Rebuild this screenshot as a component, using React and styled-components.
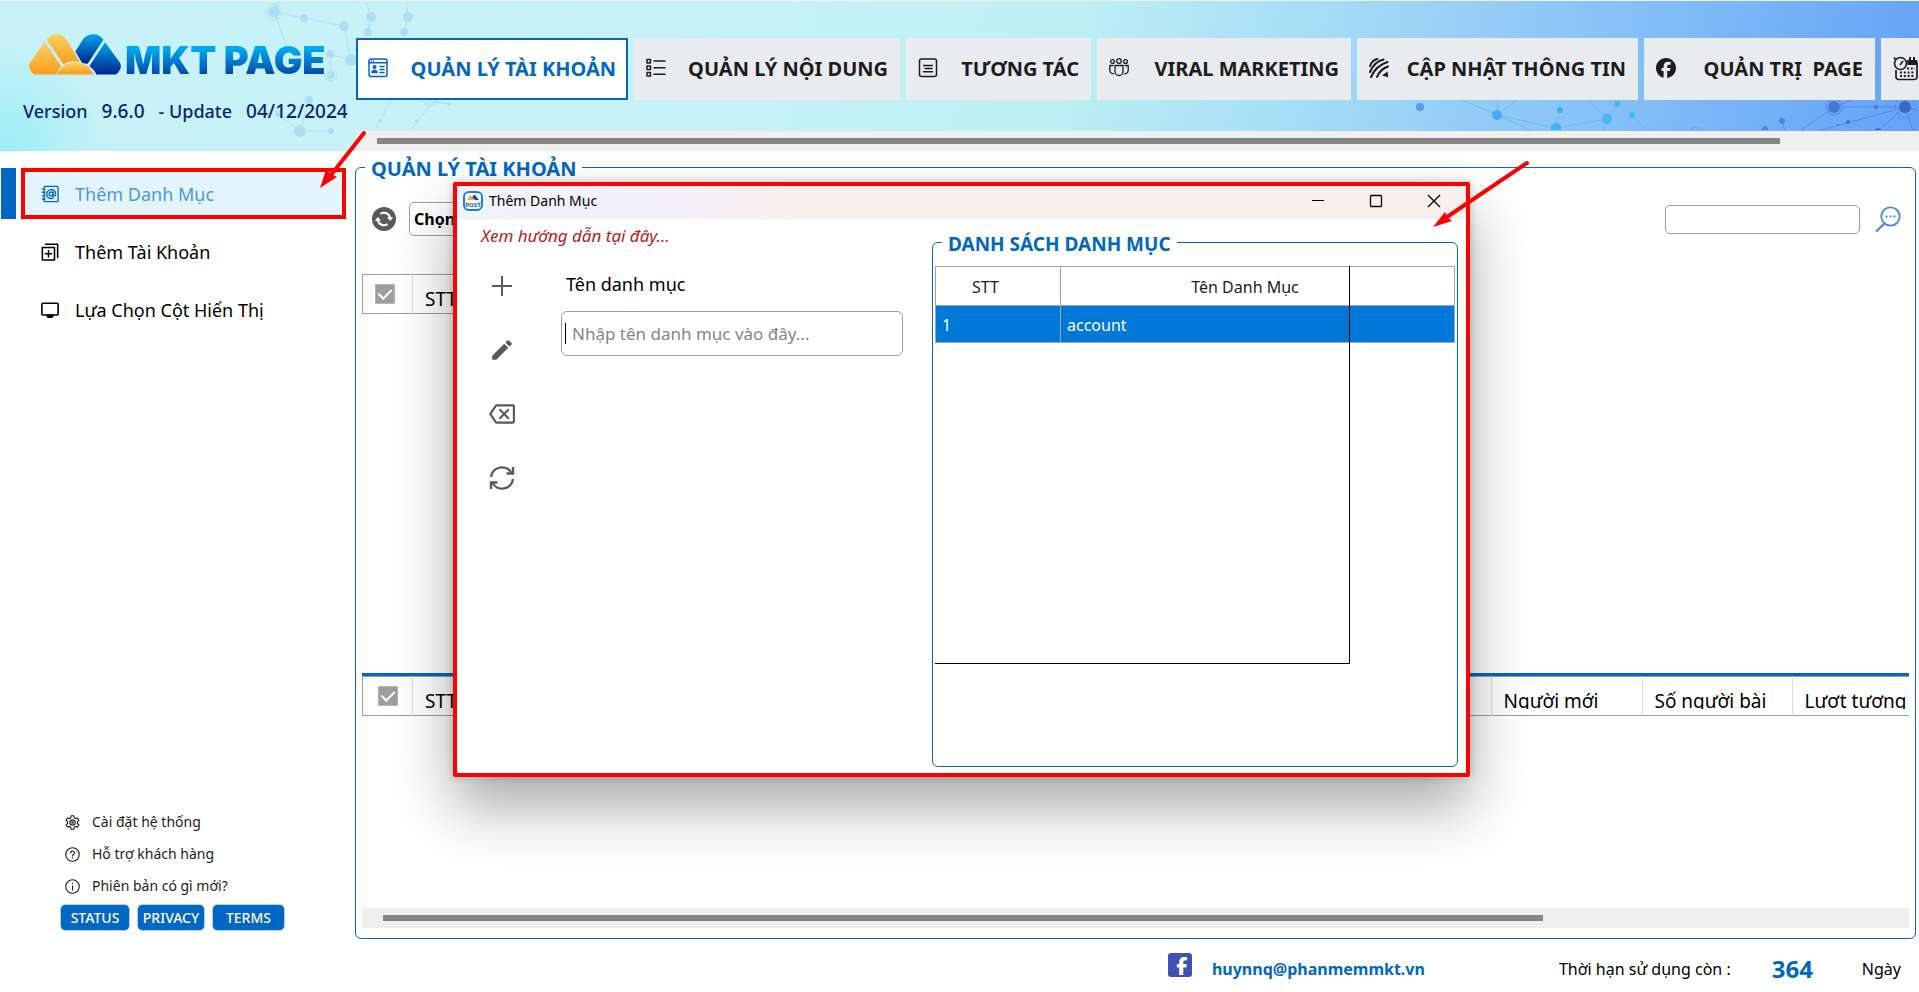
import React, { useState } from 'react';
import styled, { createGlobalStyle, css } from 'styled-components';
import { FaFacebook, FaFacebookF } from 'react-icons/fa6';
import { MdEdit, MdOutlineBackspace } from 'react-icons/md';

const BLUE = '#0067c5';
const RED = '#ff0000';

const GlobalStyle = createGlobalStyle`
  * {
    box-sizing: border-box;
  }

  body {
    margin: 0;
    background: #ffffff;
    color: #000000;
    font-family: "Noto Sans", "Open Sans", sans-serif;
  }

  button, input, select {
    font: inherit;
    color: inherit;
  }
`;

const Page = styled.div`
  position: relative;
  display: flex;
  flex-direction: column;
  min-height: 100vh;
  overflow: hidden;
`;

const Header = styled.header`
  position: relative;
  display: grid;
  grid-template-columns: 356px minmax(0, 1fr);
  height: 151px;
  border-top: 1px solid #f0f0f0;
  background:
    radial-gradient(circle at 0 100%, #9beef6 0, rgba(155, 238, 246, 0) 110px),
    linear-gradient(105deg, #c7f1f7 0%, #c6f2f7 35%, #bcf0f4 55%, #a9dff6 66%, #8cc7f7 80%, #78b4f7 90%, #62a2f6 100%);
`;

const HeaderArt = styled.svg`
  position: absolute;
  top: 0;
  ${(props) => (props.$side === 'right' ? 'right: 0;' : 'left: 230px;')}
`;

const Brand = styled.div`
  position: relative;
  padding: 25px 0 0 23px;
`;

const Logo = styled.div`
  display: flex;
  align-items: center;
  gap: 4px;
  height: 56px;
  padding-left: 6px;
`;

const LogoText = styled.span`
  font-family: Inter, "Open Sans", sans-serif;
  font-size: 38px;
  font-weight: 900;
  line-height: 40px;
  padding-top: 12px;
  white-space: nowrap;
  color: transparent;
  background: linear-gradient(#00a8f0 40%, #0347a8 90%);
  background-clip: text;
`;

const VersionRow = styled.div`
  display: flex;
  align-items: baseline;
  gap: 14px;
  margin-top: 17px;
  font-size: 19px;
  font-weight: 500;
  line-height: 24px;
  color: #0a2472;
  white-space: nowrap;
`;

const VersionLabel = styled.span`
  font-size: 18px;
`;

const NavArea = styled.div`
  position: relative;
  display: flex;
  flex-direction: column;
  justify-content: space-between;
  padding-top: 37px;
  overflow: hidden;
`;

const Tabs = styled.nav`
  display: flex;
  gap: 6px;
`;

const Tab = styled.button`
  display: flex;
  flex: 0 0 ${(props) => props.$width}px;
  align-items: center;
  justify-content: space-between;
  height: 62px;
  padding: 0 10px 2px;
  border: 2px solid ${(props) => (props.$active ? BLUE : '#e9ebee')};
  background: ${(props) => (props.$active ? '#ffffff' : '#e9ebee')};
  color: ${(props) => (props.$active ? BLUE : '#1c1c1c')};
  font-size: 20px;
  font-weight: 700;
  white-space: pre;
  cursor: pointer;

  svg {
    flex: none;
  }
`;

const Track = styled.div`
  display: flex;
  align-items: center;
  height: 20px;
  background: #efefef;
`;

const Thumb = styled.div`
  height: 6px;
  margin-left: 21px;
  width: ${(props) => props.$width};
  background: #858585;
`;

const Body = styled.div`
  display: grid;
  flex: 1;
  grid-template-columns: 355px minmax(0, 1fr);
`;

const Sidebar = styled.aside`
  display: flex;
  flex-direction: column;
  justify-content: space-between;
  padding: 17px 9px 61px 1px;
`;

const Menu = styled.nav`
  display: flex;
  flex-direction: column;
  gap: 7px;
`;

const MenuRow = styled.div`
  display: flex;
  gap: 5px;
  height: 51px;

  &::before {
    content: "";
    width: 15px;
    background: ${(props) => (props.$active ? BLUE : 'transparent')};
  }
`;

const MenuButton = styled.button`
  display: flex;
  flex: 1;
  align-items: center;
  gap: 16px;
  padding: 0 16px;
  border: 4px solid transparent;
  background: none;
  font-size: 18px;
  cursor: pointer;

  ${(props) => props.$active && css`
    border-color: ${RED};
    background: #e4f4fd;
    color: #4a98e0;

    svg {
      color: ${BLUE};
    }
  `}
`;

const HelpArea = styled.div`
  display: flex;
  flex-direction: column;
  gap: 6px;
  padding-left: 59px;
`;

const HelpLinks = styled.div`
  display: flex;
  flex-direction: column;
  gap: 8px;
  padding-left: 5px;
`;

const HelpLink = styled.a`
  display: flex;
  align-items: center;
  gap: 12px;
  font-size: 14px;
  line-height: 24px;
  color: #1c1c1c;
  text-decoration: none;
`;

const PillRow = styled.div`
  display: flex;
  gap: 7px;
`;

const Pill = styled.button`
  width: ${(props) => props.$width}px;
  height: 27px;
  padding: 0;
  border: 1px solid #b3d1ee;
  border-radius: 5px;
  background: ${BLUE};
  background-clip: padding-box;
  color: #ffffff;
  font-size: 14px;
  font-weight: 500;
  line-height: 20px;
`;

const Content = styled.div`
  display: flex;
  flex-direction: column;
  padding-top: 1px;
`;

const Group = styled.fieldset`
  display: flex;
  flex: 1;
  flex-direction: column;
  min-width: 0;
  margin: ${(props) => props.$margin};
  padding: ${(props) => props.$padding};
  border: 1px solid ${BLUE};
  border-radius: 6px;
`;

const Legend = styled.legend`
  margin-left: ${(props) => props.$offset}px;
  padding: 4px 6px 0;
  color: ${BLUE};
  font-size: ${(props) => props.$size}px;
  font-weight: 700;
  line-height: 26px;
`;

const Toolbar = styled.div`
  display: flex;
  align-items: center;
  justify-content: space-between;
  padding: 0 8px 38px 10px;
`;

const ToolGroup = styled.div`
  display: flex;
  align-items: center;
  gap: ${(props) => props.$gap}px;
`;

const IconButton = styled.button`
  display: flex;
  align-items: center;
  justify-content: center;
  padding: 0;
  border: none;
  background: none;
  color: #5a5a5a;
  cursor: pointer;
`;

const CategorySelect = styled.select`
  width: 220px;
  height: 34px;
  padding: 0 4px;
  border: 1px solid #9c9c9c;
  border-radius: 5px;
  background: #ffffff;
  font-size: 16px;
  font-weight: 700;
  appearance: none;
`;

const SearchInput = styled.input`
  width: 195px;
  height: 29px;
  padding: 0 8px;
  border: 1px solid #9c9c9c;
  border-radius: 5px;
  font-size: 16px;
`;

const GridPane = styled.div`
  flex: ${(props) => props.$grow} 1 0;
  min-height: 80px;
  overflow: hidden;
`;

const Splitter = styled.div`
  height: 3px;
  background: ${BLUE};
`;

const GridTable = styled.table`
  width: ${(props) => props.$width};
  table-layout: fixed;
  border-collapse: collapse;
  border: 1px solid #9c9c9c;
  border-right: none;

  th {
    height: 39px;
    padding: 5px 0 0 12px;
    border-right: 1px solid #dcdcdc;
    font-size: 19px;
    font-weight: 400;
    text-align: left;
    white-space: nowrap;
  }

  th:last-child {
    border-right: none;
  }
`;

const CheckHead = styled.th`
  && {
    width: 50px;
    padding: 0 0 0 ${(props) => props.$inset}px;
  }
`;

const HeadCell = styled.th`
  width: ${(props) => (props.$width ? `${props.$width}px` : 'auto')};
`;

/* the header row is shorter than its text, so descenders are cut off */
const HeadText = styled.div`
  height: 21px;
  line-height: 26px;
  overflow: hidden;
`;

const CheckAll = styled.input`
  display: block;
  width: 20px;
  height: 20px;
  margin: 0;
  appearance: none;
  background: #9e9e9e;
  border: 1px solid #b4b4b4;

  &:checked::after {
    content: "";
    display: block;
    width: 6px;
    height: 11px;
    margin: 1px auto 0;
    border: solid #ffffff;
    border-width: 0 2px 2px 0;
    transform: rotate(45deg);
  }
`;

const Footer = styled.footer`
  display: flex;
  align-items: center;
  justify-content: flex-end;
  height: 53px;
  padding: 6px 18px 0 0;
  font-size: 16px;
`;

const Account = styled.a`
  display: flex;
  align-items: center;
  gap: 20px;
  margin-right: 134px;
  color: ${BLUE};
  font-weight: 700;
  text-decoration: none;
`;

const Days = styled.strong`
  margin: 0 49px 0 41px;
  color: ${BLUE};
  font-size: 24px;
  line-height: 30px;
`;

const Window = styled.section`
  position: absolute;
  top: 182px;
  right: 449px;
  bottom: 215px;
  left: 453px;
  display: flex;
  flex-direction: column;
  border: 4px solid ${RED};
  border-radius: 2px;
  background: #ffffff;
  box-shadow: 0 30px 60px rgba(0, 0, 0, 0.34), 0 0 8px rgba(0, 0, 0, 0.2);
`;

const TitleBar = styled.div`
  display: flex;
  align-items: center;
  gap: 6px;
  height: 33px;
  padding: 0 25px 4px 6px;
  background: linear-gradient(100deg, #f2f2f9 0%, #f3f0f8 22%, #f9f0ee 34%, #f9f0ee 100%);
  font-size: 14px;
`;

const WindowTitle = styled.h1`
  flex: 1;
  margin: 0;
  font-size: 14px;
  font-weight: 400;
`;

const WindowControls = styled.div`
  display: flex;
  gap: 44px;

  button {
    color: #000000;
  }
`;

const WindowBody = styled.div`
  display: grid;
  flex: 1;
  grid-template-columns: 475px minmax(0, 1fr);
`;

const EditPane = styled.div`
  padding: 5px 29px 0 24px;
`;

const GuideLink = styled.a`
  display: block;
  color: #b22222;
  font-size: 17px;
  font-style: italic;
  line-height: 24px;
  text-decoration: none;
`;

const EditArea = styled.div`
  display: flex;
  gap: 38px;
  margin-top: 18px;
`;

const ToolColumn = styled.div`
  display: flex;
  flex-direction: column;
  gap: 24px;
  width: 42px;

  button {
    height: 40px;
  }
`;

const Form = styled.form`
  display: flex;
  flex: 1;
  flex-direction: column;
  gap: 15px;
  padding-top: 6px;

  label {
    padding-left: 5px;
    font-size: 18px;
    line-height: 24px;
  }
`;

const NameField = styled.div`
  display: flex;
  align-items: center;
  height: 45px;
  padding: 0 3px;
  border: 1px solid #9c9c9c;
  border-radius: 6px;
`;

const Caret = styled.span`
  width: 1px;
  height: 21px;
  background: #000000;
`;

const NameInput = styled.input`
  flex: 1;
  min-width: 0;
  padding: 0 6px;
  border: none;
  outline: none;
  background: none;
  font-size: 17px;

  &::placeholder {
    color: #858585;
    opacity: 1;
  }
`;

const ListPane = styled.div`
  display: flex;
  padding: 8px 8px 6px 0;
`;

const TableWrap = styled.div`
  position: relative;
  flex: 1;
`;

const CategoryTable = styled.table`
  width: 100%;
  table-layout: fixed;
  border-collapse: collapse;
  font-size: 16px;

  th, td {
    border: 1px solid #a5a5a5;
    font-weight: 400;
  }

  th {
    height: 39px;
    padding: 2px 25px 0 0;
    color: #1c1c1c;
  }

  th:first-child {
    width: 125px;
  }

  td {
    height: 37px;
    padding: 2px 6px 0;
    background: #0078d7;
    color: #ffffff;
  }
`;

/* leftover outline of the list area, drawn over the table */
const ListOutline = styled.div`
  position: absolute;
  top: 0;
  right: 105px;
  bottom: 102px;
  left: 0;
  border-right: 1px solid #000000;
  border-bottom: 1px solid #000000;
  pointer-events: none;
`;

const Arrow = styled.svg`
  position: absolute;
  top: ${(props) => props.$top}px;
  ${(props) => (props.$right ? `right: ${props.$right}px;` : `left: ${props.$left}px;`)}
  pointer-events: none;
`;

function LineIcon({ size = 20, stroke = 1.5, children }) {
  return (
    <svg
      width={size}
      height={size}
      viewBox="0 0 20 20"
      fill="none"
      stroke="currentColor"
      strokeWidth={stroke}
      strokeLinecap="round"
      strokeLinejoin="round"
      aria-hidden="true"
    >
      {children}
    </svg>
  );
}

const AccountIcon = () => (
  <LineIcon>
    <rect x="1" y="1" width="18" height="17.5" rx="2" />
    <path d="M1 4.8h18M3.2 3h.1M5.4 3h.1M12 8.5h4M12 11.5h4M12 14.5h4" />
    <circle cx="6.5" cy="9" r="1.3" fill="currentColor" />
    <path d="M4 14.5c.2-1.6 1.2-2.3 2.5-2.3s2.3.7 2.5 2.3z" fill="currentColor" />
  </LineIcon>
);

const ListIcon = () => (
  <LineIcon>
    <rect x="1" y="1.5" width="3.5" height="3.5" />
    <rect x="1" y="8" width="3.5" height="3.5" />
    <rect x="1" y="14.5" width="3.5" height="3.5" />
    <path d="M8 3h11M8 9.7h11M8 16.3h11" />
  </LineIcon>
);

const NoteIcon = () => (
  <LineIcon>
    <rect x="1.5" y="1" width="17" height="17.5" rx="2" />
    <path d="M5.5 7.5h9M7 10.5h7M5.5 13.8h9" />
  </LineIcon>
);

const PeopleIcon = () => (
  <LineIcon stroke={1.3}>
    <circle cx="3.5" cy="3.5" r="1.9" />
    <circle cx="10" cy="3" r="2.3" />
    <circle cx="16.5" cy="3.5" r="1.9" />
    <path d="M6 7.5h8v6a4 4 0 0 1-8 0zM4 7.5H.8v4.8a3.5 3.5 0 0 0 3.7 3.5M16 7.5h3.2v4.8a3.5 3.5 0 0 1-3.7 3.5" />
  </LineIcon>
);

const StripesIcon = () => (
  <LineIcon stroke={2}>
    <path d="M1 8C2.5 4 5 1.5 8.5 1M1 14C3.5 8 8 3 14.5 1.5M2 19C5 12 10.5 6.5 18.5 4M8 19c2-5 5.5-8.5 11-10.5" />
    <path d="M13 17.5l5.5-4 .8 5.8z" fill="currentColor" stroke="none" />
  </LineIcon>
);

const CalendarIcon = () => (
  <svg width="25" height="25" viewBox="0 0 25 25" fill="none" stroke="currentColor" strokeWidth="1.7" aria-hidden="true">
    <path d="M3 14v7a2.5 2.5 0 0 0 2.5 2.5h16A2.5 2.5 0 0 0 24 21V7a2 2 0 0 0-2-2" />
    <path d="M14 4h10v5H14.5z" fill="currentColor" stroke="none" />
    <path d="M17 1v4M21 1v4" strokeWidth="2" />
    <circle cx="7.5" cy="7.5" r="6" />
    <path d="M7 9l3-4M1 1.5l1.5 2" />
    <path d="M14 12.5h8M7 16.5h15M7 20h15" strokeWidth="2.2" strokeDasharray="2 1.8" />
  </svg>
);

const ContactIcon = () => (
  <LineIcon size={18}>
    <rect x="3.5" y="1.5" width="15.5" height="17" rx="1" />
    <path d="M1.5 4.5h3M1.5 8h3M1.5 12h3M1.5 15.5h3" />
    <circle cx="11.3" cy="10" r="2.2" />
    <path d="M13.5 7.8V11c0 2 2.8 1.8 2.8-1a5 5 0 1 0-2.3 4.2" />
  </LineIcon>
);

const AddCopyIcon = () => (
  <LineIcon size={18} stroke={1.7}>
    <rect x="1.5" y="5" width="13.5" height="14" />
    <path d="M5 1.5h13.5V16M8.3 8.5v7M4.8 12h7" />
  </LineIcon>
);

const ScreenIcon = () => (
  <LineIcon size={18} stroke={1.8}>
    <rect x="1" y="2.5" width="18" height="13" rx="1" />
    <path d="M6.5 16h7l-1.5 2H8z" fill="currentColor" />
  </LineIcon>
);

const GearIcon = () => (
  <LineIcon size={15}>
    <path d="M8.2 1h3.6l.6 2.8 1.7 1 2.7-.9 1.8 3.1-2.1 1.9v2.2l2.1 1.9-1.8 3.1-2.7-.9-1.7 1-.6 2.8H8.2l-.6-2.8-1.7-1-2.7.9L1.4 13l2.1-1.9V8.9L1.4 7l1.8-3.1 2.7.9 1.7-1z" />
    <circle cx="10" cy="10" r="3.5" />
    <circle cx="10" cy="10" r="1" />
  </LineIcon>
);

const QuestionIcon = () => (
  <LineIcon size={15}>
    <circle cx="10" cy="10" r="9" />
    <path d="M7.5 8a2.5 2.5 0 1 1 3.8 2c-.9.6-1.3 1-1.3 2M10 14.5v.2" />
  </LineIcon>
);

const InfoIcon = () => (
  <LineIcon size={15}>
    <circle cx="10" cy="10" r="9" />
    <path d="M10 9v5.5M10 5.8v.2" />
  </LineIcon>
);

const SyncIcon = () => (
  <svg width="26" height="26" viewBox="0 0 26 26" fill="none" stroke="currentColor" strokeWidth="2.4" aria-hidden="true">
    <path d="M2 12A11 11 0 0 1 22.5 8M24 14A11 11 0 0 1 3.5 18" />
    <path d="M24 2v6.5h-6.5M2 24v-6.5h6.5" />
  </svg>
);

const RefreshBadge = () => (
  <svg width="24" height="24" viewBox="0 0 24 24" fill="none" aria-hidden="true">
    <circle cx="12" cy="12" r="12" fill="#5a5a5a" />
    <path d="M8.5 6.8A6.3 6.3 0 0 1 18.2 11M15.5 17.2A6.3 6.3 0 0 1 5.800 13" stroke="#ffffff" strokeWidth="2" />
    <path d="M15 10.2h6.200l-3.100 3.800zM9 13.8H2.800L5.900 10z" fill="#ffffff" />
  </svg>
);

const SearchIcon = () => (
  <svg width="26" height="26" viewBox="0 0 26 26" fill="none" stroke="#4f87d2" strokeWidth="1.8" aria-hidden="true">
    <circle cx="15.5" cy="10.5" r="9.2" />
    <path d="M9.5 17.5L1 25.5" strokeWidth="2.2" />
    <path d="M10.5 10.5h2M14.5 10.5h2M18.5 10.5h2" strokeWidth="2" />
  </svg>
);

const LogoMark = () => (
  <svg width="92" height="41" viewBox="87 98 276 122" aria-hidden="true">
    <defs>
      <linearGradient id="gold" x1="0" y1="0" x2="0" y2="1">
        <stop offset="0" stopColor="#f9d262" />
        <stop offset="1" stopColor="#fc9c1c" />
      </linearGradient>
      <linearGradient id="sea" x1="0" y1="0" x2="0" y2="1">
        <stop offset="0" stopColor="#00a5ec" />
        <stop offset="1" stopColor="#02248c" />
      </linearGradient>
    </defs>
    <path d="M134 122L184 194Q174 204 168 219H103Q96 216 89 202Q85 192 90 184Z" fill="url(#gold)" />
    <path d="M140 115Q152 98 171 98Q189 99 200 115L240 183Q215 174 190 188Z" fill="url(#gold)" />
    <path d="M226 150L250 112Q261 98 281 98Q300 98 310 115L263 187Q253 187 246 184Z" fill="url(#sea)" />
    <path d="M315 122L359 182Q365 191 361 203Q354 216 347 219H289Q284 204 268 194Z" fill="url(#sea)" />
    <path d="M171 219Q187 183 226 183Q264 183 282 219Z" fill="url(#gold)" />
  </svg>
);

const AppIcon = () => (
  <svg width="20" height="20" viewBox="0 0 20 20" aria-hidden="true">
    <rect x="1" y="1" width="18" height="18" rx="5" fill="#ffffff" stroke="#1280e6" strokeWidth="2" />
    <path d="M4 9L7.5 4l4 5z" fill="#f8ae2c" />
    <path d="M9 6l2.5-2.5L16 9h-4z" fill="#0a4ea8" />
    <text x="10" y="15.5" textAnchor="middle" fontSize="6" fontWeight="700" fill="#0a5cc0">POST</text>
  </svg>
);

const FacebookBadge = styled.span`
  display: flex;
  align-items: flex-end;
  justify-content: flex-end;
  width: 24px;
  height: 24px;
  margin-bottom: 7px;
  padding: 0 1px 2px 0;
  border-radius: 3px;
  background: #3f51b5;
  color: #ffffff;
`;

const leftNodes = [
  [44, 11, 6], [74, 17, 4], [114, 25, 5], [141, 16, 5], [178, 16, 5], [138, 31, 4], [174, 31, 4],
  [100, 53, 4], [121, 59, 6], [101, 74, 4], [79, 99, 4], [48, 113, 3], [70, 130, 6], [101, 130, 3],
  [219, 103, 2], [150, 120, 2], [187, 120, 2], [146, 127, 1], [183, 127, 1],
];

const rightNodes = [
  [20, 106, 4, '#5a9bf2'], [97, 114, 5, '#4ea6f4'], [160, 109, 3, '#4ea6f4'], [156, 127, 5, '#4aaef6'],
  [207, 118, 5, '#4ab2f8'], [217, 103, 3, '#4ab2f8'], [232, 114, 3, '#4ab2f8'], [382, 120, 3, '#4a86e4'],
  [365, 128, 3, '#4a86e4'], [434, 106, 6, '#4478d8'], [476, 106, 2, '#4478d8'], [505, 106, 6, '#3f66c8'],
  [438, 124, 1, '#4070d0'], [448, 121, 2, '#4070d0'], [478, 130, 3, '#4070d0'],
];

const LeftArt = () => (
  <HeaderArt width="240" height="150" viewBox="0 0 240 150" $side="left" aria-hidden="true">
    <g stroke="#b3dff2" fill="none">
      <path d="M44 11L74 17L114 25L121 59L100 53V74M44 11L60 53M44 11L49 0M136 0L141 16L138 31M176 0L178 16L174 31M48 113L70 130H101M70 130L79 99M161 100L146 127M200 104L183 127M200 100L219 103" />
      <circle cx="44" cy="11" r="8" />
      <circle cx="101" cy="74" r="6" />
      <circle cx="200" cy="96" r="8" strokeWidth="3" strokeDasharray="2 2" />
    </g>
    {leftNodes.map(([x, y, r]) => <circle key={`${x}-${y}`} cx={x} cy={y} r={r} fill="#addff4" />)}
  </HeaderArt>
);

const RightArt = () => (
  <HeaderArt width="519" height="129" viewBox="0 0 519 129" $side="right" aria-hidden="true">
    <g stroke="#62b2f4" strokeOpacity="0.7" fill="none">
      <path d="M60 98L97 114L98 96M97 114L118 98M97 114L156 127L207 118L188 98M207 118L217 103M97 114L132 130M156 127L160 109M207 118L203 130M232 114L247 130" />
    </g>
    <g stroke="#4a7fdc" strokeOpacity="0.7" fill="none">
      <path d="M434 106H505L519 110M434 106L400 130M505 106L418 130M505 106L478 130M505 106L513 130M382 120L385 130M434 106L455 98" />
      <circle cx="434" cy="106" r="8" />
      <circle cx="505" cy="106" r="10" strokeDasharray="2 2" />
      <circle cx="296" cy="134" r="8" strokeDasharray="2 2" />
    </g>
    {rightNodes.map(([x, y, r, fill]) => <circle key={`${x}-${y}`} cx={x} cy={y} r={r} fill={fill} />)}
  </HeaderArt>
);

const tabs = [
  { label: 'QUẢN LÝ TÀI KHOẢN', width: 272, icon: <AccountIcon /> },
  { label: 'QUẢN LÝ NỘI DUNG', width: 266, icon: <ListIcon /> },
  { label: 'TƯƠNG TÁC', width: 185, icon: <NoteIcon /> },
  { label: 'VIRAL MARKETING', width: 254, icon: <PeopleIcon /> },
  { label: 'CẬP NHẬT THÔNG TIN', width: 281, icon: <StripesIcon /> },
  { label: 'QUẢN TRỊ  PAGE', width: 231, icon: <FaFacebook size={20} /> },
  { label: '', width: 240, icon: <CalendarIcon /> },
];

const menu = [
  { label: 'Thêm Danh Mục', icon: <ContactIcon /> },
  { label: 'Thêm Tài Khoản', icon: <AddCopyIcon /> },
  { label: 'Lựa Chọn Cột Hiển Thị', icon: <ScreenIcon /> },
];

const pills = [
  { label: 'STATUS', width: 70 },
  { label: 'PRIVACY', width: 68 },
  { label: 'TERMS', width: 73 },
];

function TopHeader() {
  const [active, setActive] = useState(0);

  return (
    <Header>
      <LeftArt />
      <RightArt />
      <Brand>
        <Logo>
          <LogoMark />
          <LogoText>MKT PAGE</LogoText>
        </Logo>
        <VersionRow>
          <VersionLabel>Version</VersionLabel>
          <span>9.6.0</span>
          <VersionLabel>- Update</VersionLabel>
          <span>04/12/2024</span>
        </VersionRow>
      </Brand>
      <NavArea>
        <Tabs>
          {tabs.map((tab, index) => (
            <Tab
              key={tab.label}
              type="button"
              aria-label={tab.label || 'Lịch'}
              $width={tab.width}
              $active={index === active}
              onClick={() => setActive(index)}
            >
              {tab.icon}
              {tab.label}
            </Tab>
          ))}
        </Tabs>
        <Track>
          <Thumb $width="calc(100% - 160px)" />
        </Track>
      </NavArea>
    </Header>
  );
}

function SideMenu() {
  const [active, setActive] = useState(0);

  return (
    <Sidebar>
      <Menu>
        {menu.map((item, index) => (
          <MenuRow key={item.label} $active={index === active}>
            <MenuButton type="button" $active={index === active} onClick={() => setActive(index)}>
              {item.icon}
              {item.label}
            </MenuButton>
          </MenuRow>
        ))}
      </Menu>
      <HelpArea>
        <HelpLinks>
          <HelpLink href="#settings"><GearIcon />Cài đặt hệ thống</HelpLink>
          <HelpLink href="#support"><QuestionIcon />Hỗ trợ khách hàng</HelpLink>
          <HelpLink href="#news"><InfoIcon />Phiên bản có gì mới?</HelpLink>
        </HelpLinks>
        <PillRow>
          {pills.map((pill) => (
            <Pill key={pill.label} type="button" $width={pill.width}>{pill.label}</Pill>
          ))}
        </PillRow>
      </HelpArea>
    </Sidebar>
  );
}

function AccountPanel() {
  return (
    <Group $margin="0 3px 0 0" $padding="20px 6px 10px">
      <Legend $offset={3} $size={20}>QUẢN LÝ TÀI KHOẢN</Legend>
      <Toolbar>
        <ToolGroup $gap={13}>
          <IconButton type="button" aria-label="Tải lại"><RefreshBadge /></IconButton>
          <CategorySelect aria-label="Danh mục">
            <option>Chọn danh mục</option>
          </CategorySelect>
        </ToolGroup>
        <ToolGroup $gap={15}>
          <SearchInput type="text" aria-label="Tìm kiếm" />
          <IconButton type="button" aria-label="Tìm"><SearchIcon /></IconButton>
        </ToolGroup>
      </Toolbar>
      <GridPane $grow={12}>
        <GridTable $width="50%">
          <thead>
            <tr>
              <CheckHead $inset={12}><CheckAll type="checkbox" aria-label="Chọn tất cả" defaultChecked /></CheckHead>
              <HeadCell><HeadText>STT</HeadText></HeadCell>
            </tr>
          </thead>
        </GridTable>
      </GridPane>
      <Splitter />
      <GridPane $grow={7}>
        <GridTable $width="100%">
          <thead>
            <tr>
              <CheckHead $inset={15}><CheckAll type="checkbox" aria-label="Chọn tất cả trang" defaultChecked /></CheckHead>
              <HeadCell><HeadText>STT</HeadText></HeadCell>
              <HeadCell $width={151}><HeadText>Người mới</HeadText></HeadCell>
              <HeadCell $width={150}><HeadText>Số người bài</HeadText></HeadCell>
              <HeadCell $width={117}><HeadText>Lượt tương</HeadText></HeadCell>
            </tr>
          </thead>
        </GridTable>
      </GridPane>
      <Track>
        <Thumb $width="75%" />
      </Track>
    </Group>
  );
}

function CategoryWindow() {
  const [name, setName] = useState('');

  return (
    <Window role="dialog" aria-label="Thêm Danh Mục">
      <TitleBar>
        <AppIcon />
        <WindowTitle>Thêm Danh Mục</WindowTitle>
        <WindowControls>
          <IconButton type="button" aria-label="Thu nhỏ">
            <svg width="14" height="14" viewBox="0 0 14 14" stroke="currentColor"><path d="M1 6.5h12" /></svg>
          </IconButton>
          <IconButton type="button" aria-label="Phóng to">
            <svg width="14" height="14" viewBox="0 0 14 14" fill="none" stroke="currentColor" strokeWidth="1.3"><rect x="1.5" y="1.5" width="11" height="11" rx="1" /></svg>
          </IconButton>
          <IconButton type="button" aria-label="Đóng">
            <svg width="14" height="14" viewBox="0 0 14 14" stroke="currentColor" strokeWidth="1.3"><path d="M1 1l12 12M13 1L1 13" /></svg>
          </IconButton>
        </WindowControls>
      </TitleBar>
      <WindowBody>
        <EditPane>
          <GuideLink href="#guide">Xem hướng dẫn tại đây...</GuideLink>
          <EditArea>
            <ToolColumn>
              <IconButton type="button" aria-label="Thêm">
                <svg width="20" height="20" viewBox="0 0 20 20" stroke="currentColor" strokeWidth="2"><path d="M10 0v20M0 10h20" /></svg>
              </IconButton>
              <IconButton type="button" aria-label="Sửa"><MdEdit size={26} /></IconButton>
              <IconButton type="button" aria-label="Xóa"><MdOutlineBackspace size={26} /></IconButton>
              <IconButton type="button" aria-label="Làm mới"><SyncIcon /></IconButton>
            </ToolColumn>
            <Form onSubmit={(e) => e.preventDefault()}>
              <label htmlFor="category-name">Tên danh mục</label>
              <NameField>
                <Caret />
                <NameInput
                  id="category-name"
                  type="text"
                  placeholder="Nhập tên danh mục vào đây..."
                  value={name}
                  onChange={(e) => setName(e.target.value)}
                />
              </NameField>
            </Form>
          </EditArea>
        </EditPane>
        <ListPane>
          <Group $margin="0" $padding="9px 2px 0">
            <Legend $offset={7} $size={19}>DANH SÁCH DANH MỤC</Legend>
            <TableWrap>
              <CategoryTable>
                <thead>
                  <tr>
                    <th>STT</th>
                    <th>Tên Danh Mục</th>
                  </tr>
                </thead>
                <tbody>
                  <tr>
                    <td>1</td>
                    <td>account</td>
                  </tr>
                </tbody>
              </CategoryTable>
              <ListOutline />
            </TableWrap>
          </Group>
        </ListPane>
      </WindowBody>
    </Window>
  );
}

function App() {
  return (
    <>
      <GlobalStyle />
      <Page>
        <TopHeader />
        <Body>
          <SideMenu />
          <Content>
            <AccountPanel />
            <Footer>
              <Account href="mailto:huynnq@phanmemmkt.vn">
                <FacebookBadge><FaFacebookF size={18} /></FacebookBadge>
                huynnq@phanmemmkt.vn
              </Account>
              <span>Thời hạn sử dụng còn :</span>
              <Days>364</Days>
              <span>Ngày</span>
            </Footer>
          </Content>
        </Body>
        <CategoryWindow />
        <Arrow width="60" height="64" viewBox="0 0 60 64" $top={128} $left={312} aria-hidden="true">
          <path d="M52 5L19 47" stroke={RED} strokeWidth="4" strokeLinecap="round" />
          <path d="M8 60L14 42L19 46L25 49Z" fill={RED} />
        </Arrow>
        <Arrow width="106" height="76" viewBox="0 0 106 76" $top={158} $right={386} aria-hidden="true">
          <path d="M100 5L20 59" stroke={RED} strokeWidth="4" strokeLinecap="round" />
          <path d="M6 69L18 54L20 59L25 63Z" fill={RED} />
        </Arrow>
      </Page>
    </>
  );
}

export default App;
